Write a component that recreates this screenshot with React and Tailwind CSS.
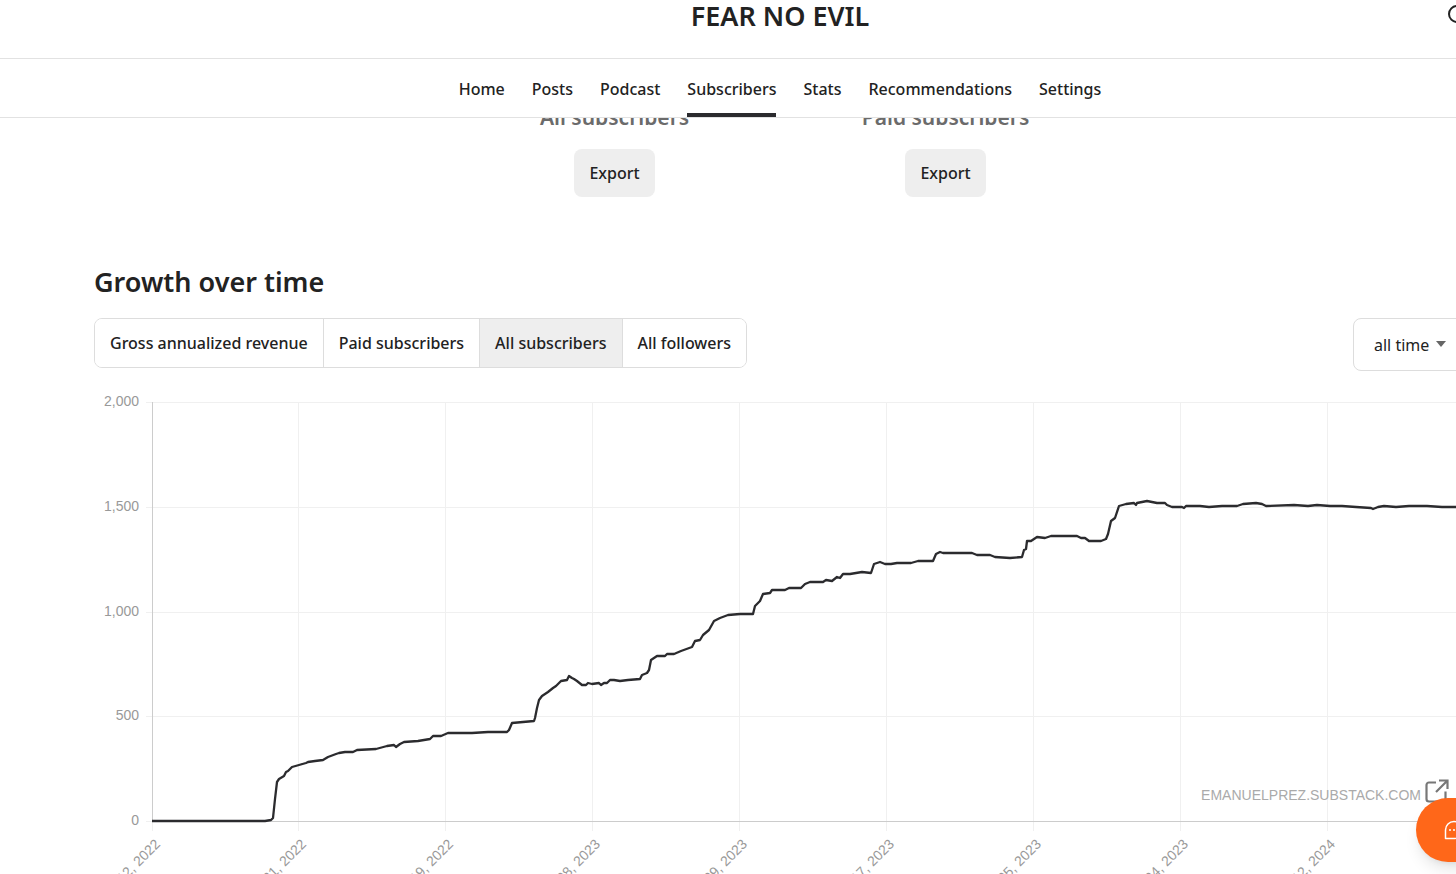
import { useState } from "react";
import { Search } from "lucide-react";

const navItems = ["Home", "Posts", "Podcast", "Subscribers", "Stats", "Recommendations", "Settings"];
const chartTabs = ["Gross annualized revenue", "Paid subscribers", "All subscribers", "All followers"];

const yTicks = [
  { label: "2,000", y: 10 },
  { label: "1,500", y: 115 },
  { label: "1,000", y: 220 },
  { label: "500", y: 324 },
  { label: "0", y: 429 },
];

const xTicks = [
  "May 12, 2022",
  "Jul 31, 2022",
  "Oct 19, 2022",
  "Jan 08, 2023",
  "Mar 29, 2023",
  "Jun 17, 2023",
  "Sep 05, 2023",
  "Nov 24, 2023",
  "Feb 12, 2024",
];

// Subscriber line, x from the y axis and y from the 2,000 grid line
const points = [
  [0, 419], [113, 419], [119, 418], [121, 416], [123, 397], [125, 380], [127, 377], [132, 374], [134, 370],
  [136, 369], [140, 365], [147, 363], [154, 361], [156, 360], [163, 359], [171, 358], [176, 355], [184, 352],
  [187, 351], [193, 350], [201, 350], [205, 348], [224, 347], [235, 344], [242, 343], [244, 345], [248, 342],
  [252, 340], [266, 339], [278, 337], [281, 334], [289, 334], [296, 331], [320, 331], [336, 330], [355, 330],
  [357, 328], [360, 321], [371, 320], [382, 319], [383, 316], [385, 306], [387, 298], [390, 294], [396, 290],
  [401, 286], [404, 284], [409, 279], [415, 278], [417, 274], [420, 276], [422, 277], [425, 279], [430, 283],
  [434, 283], [436, 281], [440, 282], [447, 281], [449, 283], [452, 281], [455, 281], [458, 278], [462, 278],
  [468, 279], [476, 278], [488, 277], [490, 273], [495, 271], [497, 268], [499, 258], [505, 254], [513, 254],
  [515, 252], [522, 252], [529, 249], [540, 245], [543, 239], [548, 238], [551, 233], [557, 228], [562, 219],
  [568, 216], [576, 213], [588, 212], [601, 212], [603, 204], [608, 199], [611, 192], [618, 191], [620, 188],
  [633, 188], [637, 186], [649, 186], [653, 182], [658, 180], [671, 180], [674, 178], [680, 179], [685, 175],
  [688, 176], [691, 172], [698, 172], [710, 170], [719, 171], [722, 162], [728, 160], [733, 162], [739, 162],
  [745, 161], [759, 161], [766, 159], [781, 159], [784, 152], [788, 150], [791, 151], [820, 151], [825, 153],
  [838, 153], [843, 155], [858, 156], [870, 155], [872, 148], [874, 147], [875, 139], [879, 139], [885, 135],
  [893, 136], [899, 134], [925, 134], [929, 136], [933, 136], [937, 139], [949, 139], [954, 137], [956, 132],
  [959, 119], [963, 116], [967, 104], [974, 102], [982, 101], [984, 103], [985, 101], [995, 99], [1005, 101],
  [1013, 101], [1015, 103], [1020, 105], [1030, 105], [1032, 106], [1034, 104], [1048, 104], [1057, 105],
  [1070, 104], [1085, 104], [1091, 102], [1104, 101], [1110, 102], [1114, 104], [1142, 103], [1156, 104],
  [1165, 103], [1178, 104], [1190, 104], [1204, 105], [1219, 106], [1221, 107], [1226, 105], [1232, 104],
  [1244, 105], [1257, 104], [1275, 104], [1290, 105], [1314, 105],
];

const Header = () => (
  <header className="relative z-10 bg-white">
    <div className="grid h-[59px] grid-cols-[1fr_auto_1fr] items-start border-b border-[#e2e2e2] pr-[90px]">
      <h1 className="col-start-2 pl-[90px] text-[27px] leading-8 font-semibold">FEAR NO EVIL</h1>
      <button aria-label="Search" className="mt-[3px] justify-self-end">
        <Search className="h-6 w-6 text-[#222]" />
      </button>
    </div>
    <nav className="flex h-[59px] justify-center gap-[27px] border-b border-[#e2e2e2]">
      {navItems.map((item) => (
        <a
          key={item}
          href="#"
          className={`flex items-center border-b-4 pt-[6px] text-base font-medium ${
            item === "Subscribers" ? "border-b-[#2b2b2e]" : "border-b-transparent"
          }`}
        >
          {item}
        </a>
      ))}
    </nav>
  </header>
);

const ExportColumn = ({ title }) => (
  <div className="flex w-[331px] flex-col items-center gap-4">
    <h3 className="text-[21px] leading-8 font-semibold text-[#6b6b6b]">{title}</h3>
    <button className="h-12 rounded-lg bg-[#eeeeee] px-[15px] text-base font-medium">Export</button>
  </div>
);

const GrowthChart = () => {
  const line = points.map(([x, y]) => `${x + 58},${y + 10}`).join(" ");

  return (
    <svg
      className="block h-[520px] w-full overflow-visible font-['Liberation_Sans',Arial,sans-serif] text-sm"
      role="img"
      aria-label="All subscribers over time"
    >
      {/* grid */}
      {yTicks.map(({ label, y }) => (
        <g key={label}>
          <line x1="52" x2="100%" y1={y} y2={y} stroke="#f0f0f0" transform="translate(0 .5)" />
          <text x="45" y={y + 4} textAnchor="end" fill="#999">
            {label}
          </text>
        </g>
      ))}
      {xTicks.map((label, i) => (
        <g key={label} transform={`translate(${Math.floor(58 + i * 146.9)} 0)`}>
          <line x1=".5" x2=".5" y1="10" y2="439" stroke="#f0f0f0" />
          <text transform="translate(9 453) rotate(-45)" textAnchor="end" fill="#999">
            {label}
          </text>
        </g>
      ))}
      {/* axes */}
      <line x1="58.5" x2="58.5" y1="10" y2="429" stroke="#ccc" />
      <line x1="58" x2="100%" y1="429.5" y2="429.5" stroke="#ccc" />
      <polyline points={line} fill="none" stroke="#2b2b2e" strokeWidth="2.3" strokeLinejoin="round" />
    </svg>
  );
};

const App = () => {
  const [activeTab, setActiveTab] = useState("All subscribers");

  return (
    <div className="relative h-screen overflow-hidden bg-white font-['Noto_Sans','Segoe_UI',sans-serif] text-[#222]">
      {/* content is wider than the window and runs off its right edge */}
      <div className="-mr-[104px]">
        <Header />

        <main className="px-[94px]">
          <section className="-mt-[17px] flex justify-center">
            <ExportColumn title="All subscribers" />
            <ExportColumn title="Paid subscribers" />
          </section>

          <section className="pt-[65px]">
            <h2 className="text-[27px] leading-10 font-semibold">Growth over time</h2>

            <div className="mt-4 flex items-start justify-between">
              <div className="flex h-[50px] divide-x divide-[#dddddd] overflow-hidden rounded-lg border border-[#dddddd]">
                {chartTabs.map((tab) => (
                  <button
                    key={tab}
                    onClick={() => setActiveTab(tab)}
                    className={`px-[15px] text-base font-medium ${activeTab === tab ? "bg-[#eeeeee]" : "bg-white"}`}
                  >
                    {tab}
                  </button>
                ))}
              </div>

              <div className="relative">
                <select
                  aria-label="Time range"
                  className="h-[53px] w-[113px] appearance-none rounded-lg border border-[#dddddd] bg-white pl-5 text-base"
                >
                  <option>all time</option>
                  <option>90 days</option>
                  <option>30 days</option>
                </select>
                <svg className="pointer-events-none absolute top-[23px] right-5 h-[6px] w-[10px]" viewBox="0 0 10 6">
                  <path d="M0 0h10L5 6z" fill="#666" />
                </svg>
              </div>
            </div>

            <div className="relative mt-[21px]">
              <GrowthChart />
              <a
                href="#"
                className="absolute top-[387px] right-[17px] flex items-start gap-[4px] font-['Liberation_Sans',Arial,sans-serif] text-sm text-[#aaaaaa]"
              >
                <span className="pt-[6px]">EMANUELPREZ.SUBSTACK.COM</span>
                <svg className="h-6 w-6" viewBox="0 0 24 24" fill="none" stroke="#777" strokeWidth="2.2">
                  <path d="M11 3.500H4a2.500 2.500 0 0 0-2.500 2.500V20A2.500 2.500 0 0 0 4 22.500H18A2.500 2.500 0 0 0 20.500 20V12.500M14 1.500h8.500V10M22.500 1.500L11 13" />
                </svg>
              </a>
            </div>
          </section>
        </main>
      </div>

      <button
        aria-label="Open chat"
        className="absolute -right-9 bottom-3 flex h-16 w-[76px] items-center justify-center rounded-full bg-[#ff6719] shadow-lg"
      >
        <svg className="h-6 w-6" viewBox="0 0 24 24" fill="none" stroke="white" strokeWidth="1.500" strokeLinejoin="round">
          <path d="M12 3.500a8.500 8.500 0 1 1 0 17H3.500V12A8.500 8.500 0 0 1 12 3.500z" />
          <path d="M8 12h.01M12 12h.01M16 12h.01" strokeWidth="2" strokeLinecap="round" />
        </svg>
      </button>
    </div>
  );
};

export default App;
